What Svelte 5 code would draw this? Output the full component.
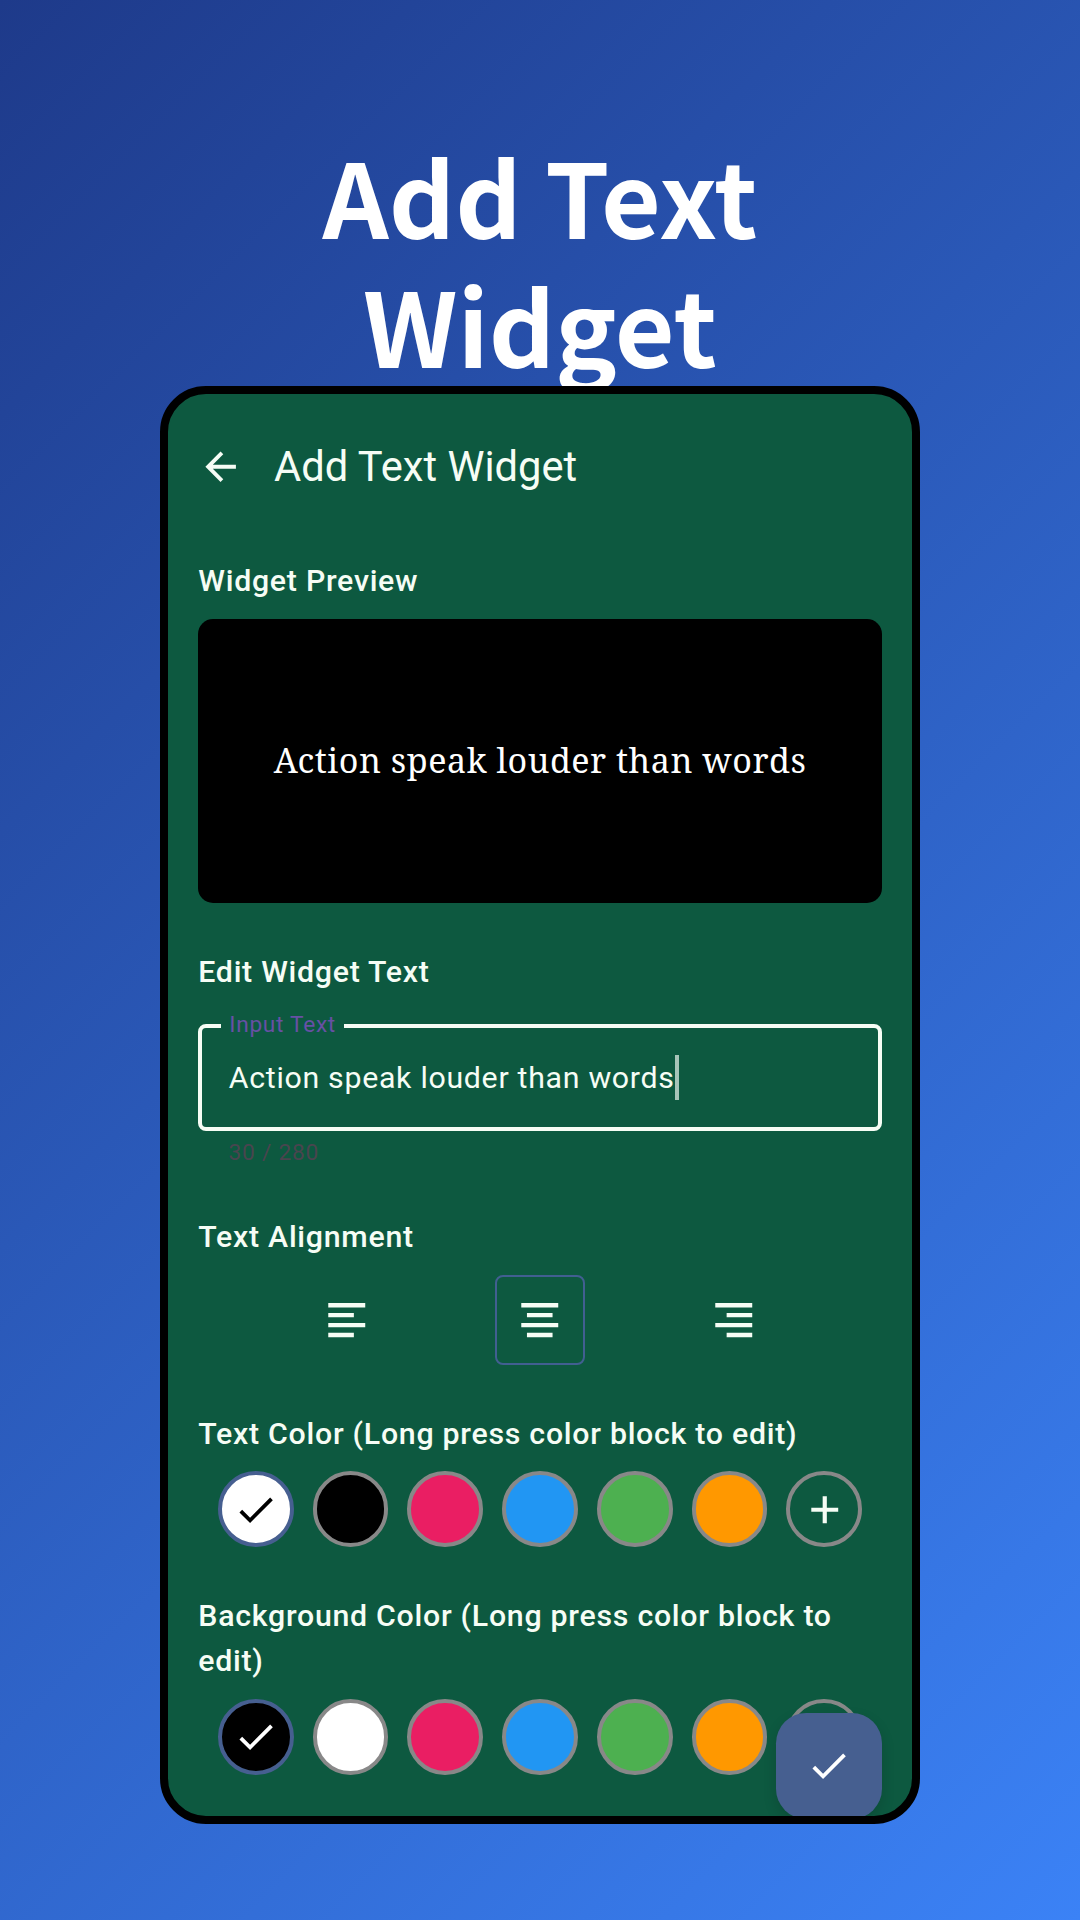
<script>
  const quote = 'Action speak louder than words';
  const aligns = [
    { id: 'left', path: 'M2.25 3.2h19.5v2.3H2.25zM2.25 8.4h13.5v2.3H2.25zM2.25 13.7h19.5V16H2.25zM2.25 18.9h13.5v2.3H2.25z' },
    { id: 'center', path: 'M2.25 3.2h19.5v2.3H2.25zM5.25 8.4h13.5v2.3H5.25zM2.25 13.7h19.5V16H2.25zM5.25 18.9h13.5v2.3H5.25z' },
    { id: 'right', path: 'M2.25 3.2h19.5v2.3H2.25zM8.25 8.4h13.5v2.3H8.25zM2.25 13.7h19.5V16H2.25zM8.25 18.9h13.5v2.3H8.25z' }
  ];
  const selectedAlign = 'center';
  const accents = ['#ea1e63', '#2196f3', '#4db050', '#ff9800'];
  const textColors = ['#ffffff', '#000000', ...accents];
  const backColors = ['#000000', '#ffffff', ...accents];
</script>

{#snippet check()}
  <svg class="icon" viewBox="0 0 24 24"><path d="M9 16.17 4.83 12l-1.42 1.41L9 19 21 7l-1.41-1.41z" /></svg>
{/snippet}

{#snippet swatches(colors)}
  <div class="swatches">
    {#each colors as color, i}
      <button class="swatch" class:selected={i === 0} class:light={color === '#ffffff'} style="background-color: {color}" aria-label={color}>
        {#if i === 0}{@render check()}{/if}
      </button>
    {/each}
    <button class="swatch" aria-label="add">
      <svg class="icon" viewBox="0 0 24 24"><path d="M19.1 13.1h-6v6h-2.2v-6h-6v-2.2h6v-6h2.2v6h6z" /></svg>
    </button>
  </div>
{/snippet}

<main class="stage">
  <h1>Add Text<br />Widget</h1>
  <div class="phone">
    <header>
      <svg class="icon" viewBox="0 0 24 24"><path d="M20 10.9H7.83l5.49-5.49L11.9 4l-8 8 8 8 1.42-1.41L7.83 13.1H20z" /></svg>
      <span class="title">Add Text Widget</span>
    </header>

    <section>
      <h2>Widget Preview</h2>
      <div class="preview">{quote}</div>
    </section>

    <section>
      <h2>Edit Widget Text</h2>
      <fieldset>
        <legend>Input Text</legend>
        <div class="value">{quote}<span class="caret"></span></div>
      </fieldset>
      <div class="counter">30 / 280</div>
    </section>

    <section>
      <h2>Text Alignment</h2>
      <div class="aligns">
        {#each aligns as a}
          <button class="align" class:active={a.id === selectedAlign} aria-label={a.id}>
            <svg class="icon" viewBox="0 0 24 24"><path d={a.path} /></svg>
          </button>
        {/each}
      </div>
    </section>

    <section>
      <h2>Text Color (Long press color block to edit)</h2>
      {@render swatches(textColors)}
    </section>

    <section>
      <h2>Background Color (Long press color block to edit)</h2>
      {@render swatches(backColors)}
    </section>

    <button class="fab" aria-label="save">{@render check()}</button>
  </div>
</main>

<style>
  :global(body) {
    margin: 0;
  }
  .stage {
    box-sizing: border-box;
    width: 1080px;
    height: 1920px;
    overflow: hidden;
    display: flex;
    flex-direction: column;
    align-items: center;
    padding-top: 130px;
    background: linear-gradient(135deg, #1e3a8a, #3b82f6);
    font-family: Roboto, sans-serif;
  }
  h1 {
    flex: none;
    height: 256px;
    margin: 0;
    color: #fff;
    font: 700 103.2px/129px 'Noto Sans CJK SC', sans-serif;
    text-align: center;
    white-space: nowrap;
  }
  .phone {
    position: relative;
    flex: none;
    box-sizing: border-box;
    width: 760px;
    height: 1438px;
    padding: 12px 30.3px 0;
    border: 8px solid #000;
    border-radius: 46px;
    overflow: hidden;
    background: #0d5940;
    color: #f6fdf5;
  }
  header {
    display: flex;
    align-items: center;
    gap: 30.3px;
    height: 121.8px;
    margin-bottom: 30.6px;
  }
  .icon {
    display: block;
    width: 45.5px;
    height: 45.5px;
    fill: currentColor;
  }
  .title {
    font-size: 41.7px;
    line-height: 53px;
  }
  section {
    margin-bottom: 45.4px;
  }
  h2 {
    margin: 0 0 15.2px;
    font-size: 30.3px;
    line-height: 45.5px;
    font-weight: 500;
    letter-spacing: 0.73px;
  }
  .preview {
    display: flex;
    align-items: center;
    justify-content: center;
    box-sizing: border-box;
    height: 284.2px;
    padding-bottom: 2px;
    border-radius: 15px;
    background: #000;
    color: #fff;
    font-family: 'Noto Serif', 'DejaVu Serif Condensed', 'DejaVu Serif', serif;
    font-size: 34.1px;
    letter-spacing: 0.52px;
    white-space: nowrap;
  }
  fieldset {
    box-sizing: border-box;
    height: 108.4px;
    margin: 28.2px 0 0;
    padding: 0 26.5px 0 19px;
    border: 4px solid #f6fdf5;
    border-radius: 8px;
    min-width: 0;
  }
  legend {
    padding: 0 7.5px 3px 8px;
    color: #6750a4;
    font-size: 22.7px;
    line-height: 5px;
    letter-spacing: 0.7px;
  }
  .value {
    display: flex;
    align-items: center;
    height: 94px;
    padding-left: 7.5px;
    font-size: 30.3px;
    letter-spacing: 0.7px;
    white-space: nowrap;
  }
  .caret {
    width: 4px;
    height: 45.5px;
    background: #a7c4b8;
  }
  .counter {
    margin-top: 7.4px;
    padding-left: 30.3px;
    color: #49454f;
    font-size: 22.7px;
    line-height: 30.3px;
    letter-spacing: 0.76px;
  }
  .aligns {
    display: flex;
    justify-content: space-evenly;
  }
  button {
    display: flex;
    align-items: center;
    justify-content: center;
    box-sizing: border-box;
    padding: 0;
    background: none;
    color: inherit;
  }
  .align {
    width: 90.9px;
    height: 90.9px;
    border: 2px solid transparent;
    border-radius: 8px;
  }
  .align.active {
    border-color: #415f91;
  }
  .swatches {
    display: flex;
    justify-content: center;
    gap: 19px;
  }
  .swatch {
    width: 75.8px;
    height: 75.8px;
    border: 4px solid #888;
    border-radius: 50%;
  }
  .swatch.selected {
    border-color: #465f90;
    color: #fff;
  }
  .swatch.selected.light {
    color: #000;
  }
  .fab {
    position: absolute;
    right: 30.3px;
    bottom: -2.7px;
    width: 106px;
    height: 106px;
    border: 0;
    border-radius: 30.3px;
    background: #465f90;
    color: #fff;
    box-shadow: 0 6px 14px rgba(0, 0, 0, 0.14);
  }
</style>
